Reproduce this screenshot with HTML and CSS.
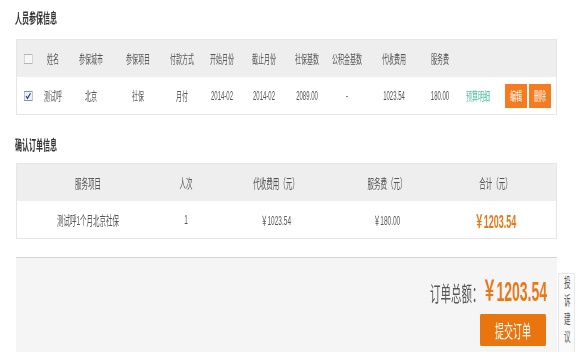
FILE: index.html
```html
<!DOCTYPE html>
<html lang="zh-CN">
<head>
  <meta charset="UTF-8">
  <meta name="viewport" content="width=device-width, initial-scale=1.0">
  <title>确认订单</title>
  <link rel="stylesheet" href="styles.css">
</head>
<body>
  <div class="frame">
    <div class="page">
      <h3 class="title">人员参保信息</h3>
      <div class="sheet staff">
        <div class="line head">
          <span><i class="cb"></i></span>
          <span>姓名</span>
          <span>参保城市</span>
          <span>参保项目</span>
          <span>付款方式</span>
          <span>开始月份</span>
          <span>截止月份</span>
          <span>社保基数</span>
          <span>公积金基数</span>
          <span>代收费用</span>
          <span>服务费</span>
          <span></span>
          <span></span>
        </div>
        <div class="line">
          <span>
            <i class="cb checked">
              <svg viewBox="0 0 10 10" preserveAspectRatio="none"><polyline points="2,5 4,8 8,1.5" fill="none" stroke="#2c3566" stroke-width="1.4"/></svg>
            </i>
          </span>
          <span>测试呼</span>
          <span>北京</span>
          <span>社保</span>
          <span>月付</span>
          <span>2014-02</span>
          <span>2014-02</span>
          <span>2089.00</span>
          <span>-</span>
          <span>1023.54</span>
          <span>180.00</span>
          <span><a class="detail" href="#">预算明细</a></span>
          <span class="actions">
            <button class="btn-sm">编辑</button>
            <button class="btn-sm">删除</button>
          </span>
        </div>
      </div>

      <h3 class="title second">确认订单信息</h3>
      <div class="sheet order">
        <div class="line head">
          <span>服务项目</span>
          <span>人次</span>
          <span>代收费用（元）</span>
          <span>服务费（元）</span>
          <span>合计（元）</span>
        </div>
        <div class="line">
          <span>测试呼1个月北京社保</span>
          <span>1</span>
          <span>￥1023.54</span>
          <span>￥180.00</span>
          <span><b class="price">￥1203.54</b></span>
        </div>
      </div>

      <div class="panel">
        <div class="total">订单总额：<b>￥1203.54</b></div>
        <button class="submit">提交订单</button>
      </div>

      <div class="side">投诉建议</div>
    </div>
  </div>
</body>
</html>
```

FILE: styles.css
```css
body {
  margin: 0;
  overflow: hidden;
  background: #fff;
  font-family: "Liberation Sans", "Noto Sans CJK SC", sans-serif;
  color: #555;
}
.frame {
  width: 578px;
  height: 352px;
  overflow: hidden;
}
/* the shot is squeezed horizontally, so the page is laid out at twice the width */
.page {
  position: relative;
  width: 1156px;
  box-sizing: border-box;
  padding: 8px 0 0 32px;
  transform: scaleX(.5);
  transform-origin: 0 0;
}
.title {
  margin: 0 0 11px -2px;
  font-size: 14px;
  line-height: 20px;
  font-weight: bold;
  color: #333;
}
.title.second {
  margin-top: 20px;
  margin-bottom: 8px;
}
.sheet {
  width: 1082px;
  box-sizing: border-box;
  border: 1px solid #e6e6e6;
  border-width: 1px 2px;
}
.line {
  display: grid;
  height: 37px;
  align-items: center;
  font-size: 12px;
  background: #fff;
}
.line.head {
  background: #eee;
}
.line > span {
  display: flex;
  justify-content: center;
  align-items: center;
  white-space: nowrap;
}
.staff .line {
  grid-template-columns: 44px 56px 96px 92px 84px 76px 92px 80px 80px 108px 76px 76px 1fr;
}
.order .line {
  grid-template-columns: 284px 108px 252px 192px 1fr;
  font-size: 13px;
}
.cb {
  display: block;
  width: 17px;
  height: 10px;
  box-sizing: border-box;
  border: 1px solid #b5b5b5;
  background: #f6f6f6;
}
.cb.checked {
  border-color: #8a90b0;
  background: #eef0f8;
}
.cb svg {
  display: block;
  width: 100%;
  height: 100%;
}
.detail {
  color: #47bf9c;
  text-decoration: none;
}
.actions.actions {
  justify-content: flex-end;
  gap: 4px;
  padding-right: 10px;
}
.btn-sm {
  width: 44px;
  height: 24px;
  padding: 0;
  border: 0;
  background: #f47b1f;
  color: #fff;
  font-family: inherit;
  font-size: 12px;
}
.price {
  color: #e8791a;
  font-size: 18px;
}
.panel {
  width: 1082px;
  box-sizing: border-box;
  margin-top: 18px;
  padding: 19px 20px 6px 0;
  border-top: 1px solid #d4d4d4;
  background: #f5f5f5;
  display: flex;
  flex-direction: column;
  align-items: flex-end;
}
.total {
  display: flex;
  align-items: baseline;
  height: 30px;
  line-height: 30px;
  font-size: 21px;
  color: #555;
}
.total b {
  font-size: 28px;
  color: #e8791a;
}
.submit {
  margin-top: 7px;
  margin-right: 2px;
  width: 132px;
  height: 32px;
  padding: 0;
  border: 0;
  border-radius: 2px;
  background: #e8750e;
  color: #fff;
  font-family: inherit;
  font-size: 18px;
}
.side {
  position: absolute;
  left: 1116px;
  top: 273px;
  width: 34px;
  height: 79px;
  box-sizing: border-box;
  padding-top: 2px;
  border: 1px solid #e8e8e8;
  border-width: 1px 2px 0;
  background: #fafafa;
  writing-mode: vertical-lr;
  text-orientation: upright;
  letter-spacing: 5px;
  line-height: 30px;
  font-size: 13px;
  color: #555;
}
```
